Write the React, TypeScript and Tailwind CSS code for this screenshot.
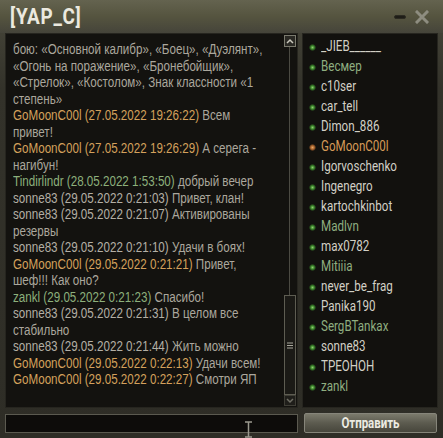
import React from 'react';

type Msg = {
  head: string;
  body: string;
  tone: 'orange' | 'green' | 'gray' | 'none';
};

const toneClass = {
  orange: 'text-[#d4a15c]',
  green: 'text-[#8db07c]',
  gray: 'text-[#b3afa5]',
  none: '',
};

// wrapping follows the screenshot, so lines are given explicitly with \n
const messages: Msg[] = [
  {
    head: '',
    body: 'бою: «Основной калибр», «Боец», «Дуэлянт»,\n«Огонь на поражение», «Бронебойщик»,\n«Стрелок», «Костолом», Знак классности «1\nстепень»',
    tone: 'none',
  },
  { head: 'GoMoonC00l (27.05.2022 19:26:22)', body: ' Всем\nпривет!', tone: 'orange' },
  { head: 'GoMoonC00l (27.05.2022 19:26:29)', body: ' А серега -\nнагибун!', tone: 'orange' },
  { head: 'Tindirlindr (28.05.2022 1:53:50)', body: ' добрый вечер', tone: 'green' },
  { head: 'sonne83 (29.05.2022 0:21:03)', body: ' Привет, клан!', tone: 'gray' },
  { head: 'sonne83 (29.05.2022 0:21:07)', body: ' Активированы\nрезервы', tone: 'gray' },
  { head: 'sonne83 (29.05.2022 0:21:10)', body: ' Удачи в боях!', tone: 'gray' },
  { head: 'GoMoonC00l (29.05.2022 0:21:21)', body: ' Привет,\nшеф!!! Как оно?', tone: 'orange' },
  { head: 'zankl (29.05.2022 0:21:23)', body: ' Спасибо!', tone: 'green' },
  { head: 'sonne83 (29.05.2022 0:21:31)', body: ' В целом все\nстабильно', tone: 'gray' },
  { head: 'sonne83 (29.05.2022 0:21:44)', body: ' Жить можно', tone: 'gray' },
  { head: 'GoMoonC00l (29.05.2022 0:22:13)', body: ' Удачи всем!', tone: 'orange' },
  { head: 'GoMoonC00l (29.05.2022 0:22:27)', body: ' Смотри ЯП', tone: 'orange' },
];

const members: { name: string; tone: 'white' | 'green' | 'orange' }[] = [
  { name: '_JIEB______', tone: 'white' },
  { name: 'Весмер', tone: 'green' },
  { name: 'c10ser', tone: 'white' },
  { name: 'car_tell', tone: 'white' },
  { name: 'Dimon_886', tone: 'white' },
  { name: 'GoMoonC00l', tone: 'orange' },
  { name: 'Igorvoschenko', tone: 'white' },
  { name: 'Ingenegro', tone: 'white' },
  { name: 'kartochkinbot', tone: 'white' },
  { name: 'Madlvn', tone: 'green' },
  { name: 'max0782', tone: 'white' },
  { name: 'Mitiiia', tone: 'green' },
  { name: 'never_be_frag', tone: 'white' },
  { name: 'Panika190', tone: 'white' },
  { name: 'SergBTankax', tone: 'green' },
  { name: 'sonne83', tone: 'white' },
  { name: 'ТРЕОНОН', tone: 'white' },
  { name: 'zankl', tone: 'green' },
];

const memberText = {
  white: 'text-[#d2d0c6]',
  green: 'text-[#8fae80]',
  orange: 'text-[#d79b58]',
};

function Dot({ orange }: { orange?: boolean }) {
  return (
    <span
      className={
        orange
          ? 'w-[7px] h-[7px] rounded-full bg-[radial-gradient(circle,#e8a868_0%,#a4602a_40%,rgba(120,60,20,0)_75%)]'
          : 'w-[7px] h-[7px] rounded-full bg-[radial-gradient(circle,#8fd070_0%,#357a26_40%,rgba(30,80,20,0)_75%)]'
      }
    />
  );
}

function ChatMessage({ m }: { m: Msg }) {
  const [first, ...rest] = m.body.split('\n');
  return (
    <>
      <div>
        {m.head && <span className={toneClass[m.tone]}>{m.head}</span>}
        {first}
      </div>
      {rest.map((line, i) => (
        <div key={i}>{line}</div>
      ))}
    </>
  );
}

export default function App() {
  return (
    <div className="relative w-[443px] h-[438px] overflow-hidden flex flex-col bg-[linear-gradient(180deg,#4a493c_0%,#33322a_20%,#2e2d26_100%)] font-['Liberation_Sans',Arial,sans-serif]">
      {/* Title bar */}
      <div className="h-[33px] flex items-center px-[10px] bg-[linear-gradient(180deg,#64634f_0%,#55543f_50%,#45443a_100%)]">
        <span className="inline-block origin-left scale-x-[0.86] font-['Roboto',sans-serif] font-bold text-[22px] leading-none text-[#ebe9df] tracking-[0.8px]">
          [YAP_C]
        </span>
        <div className="ml-auto flex items-center gap-[9px] pr-[4px]">
          <span className="w-[12px] h-[4px] rounded-[2px] bg-[#1e1d17] border border-[#2c2b22]" />
          <svg width="14" height="14" viewBox="0 0 14 14">
            <path d="M2 2 L12 12 M12 2 L2 12" stroke="#8e8d80" strokeWidth="3" strokeLinecap="square" />
          </svg>
        </div>
      </div>

      {/* Main panels */}
      <div className="h-[375px] flex px-[5px] gap-[4px]">
        {/* Chat */}
        <div className="w-[293px] flex bg-[#13120f] border border-[#26251f]">
          <div className="flex-1 pl-[7px] pt-[7px] overflow-hidden">
            <div className="origin-top-left scale-x-[0.83] text-[14px] leading-[16.5px] text-[#aba79d] whitespace-pre">
              {messages.map((m, i) => (
                <ChatMessage key={i} m={m} />
              ))}
            </div>
          </div>
          {/* Scrollbar */}
          <div className="w-[13px] mr-[1px] flex flex-col items-center">
            <div className="mt-[1px] w-[12px] h-[12px] border border-[#7a7a6e] bg-[#2a2924] flex items-center justify-center">
              <svg width="8" height="6" viewBox="0 0 8 6">
                <path d="M1 5 L4 2 L7 5" stroke="#c8c6bb" strokeWidth="1.5" fill="none" />
              </svg>
            </div>
            <div className="flex-1 w-px bg-[#4b4a42]" />
            <div className="w-[12px] h-[100px] border border-[#5e5d52] bg-[#1b1a16] flex items-center justify-center">
              <svg width="6" height="7" viewBox="0 0 6 7">
                <path d="M0 1 H6 M0 3.5 H6 M0 6 H6" stroke="#a9a79c" strokeWidth="1" />
              </svg>
            </div>
            <div className="mb-[1px] w-[12px] h-[11px] border border-[#3f3e36] bg-[#1f1e1a] flex items-center justify-center">
              <svg width="8" height="6" viewBox="0 0 8 6">
                <path d="M1 1 L4 4 L7 1" stroke="#6e6d63" strokeWidth="1.5" fill="none" />
              </svg>
            </div>
          </div>
        </div>

        {/* Members */}
        <div className="flex-1 bg-[#12110e] border border-[#26251f] pt-[3px] pl-[6px]">
          {members.map((m) => (
            <div key={m.name} className="h-[20px] flex items-center gap-[5px]">
              <Dot orange={m.tone === 'orange'} />
              <span
                className={`inline-block origin-left scale-x-[0.8] font-['Roboto',sans-serif] text-[14.5px] leading-none whitespace-nowrap ${memberText[m.tone]}`}
              >
                {m.name}
              </span>
            </div>
          ))}
        </div>
      </div>

      {/* Input row */}
      <div className="flex items-center px-[5px] gap-[6px] mt-[5px]">
        <div className="w-[293px] h-[19px] border border-[#5b5a50] bg-[#0d0c0a]" />
        <button className="w-[133px] h-[20px] rounded-[2px] border border-[#86857a] bg-[linear-gradient(180deg,#7b7a6c_0%,#5c5b4f_50%,#47463c_100%)] flex items-center justify-center">
          <span className="inline-block scale-x-[0.82] font-['Roboto',sans-serif] font-bold text-[14px] leading-none text-[#ecebe2]">
            Отправить
          </span>
        </button>
      </div>

      {/* mouse cursor */}
      <svg className="absolute left-[244px] top-[421px]" width="9" height="17" viewBox="0 0 9 17">
        <path d="M1 1 H8 M4.5 1 V16 M1 16 H8" stroke="#9a998e" strokeWidth="1.5" />
      </svg>
    </div>
  );
}
